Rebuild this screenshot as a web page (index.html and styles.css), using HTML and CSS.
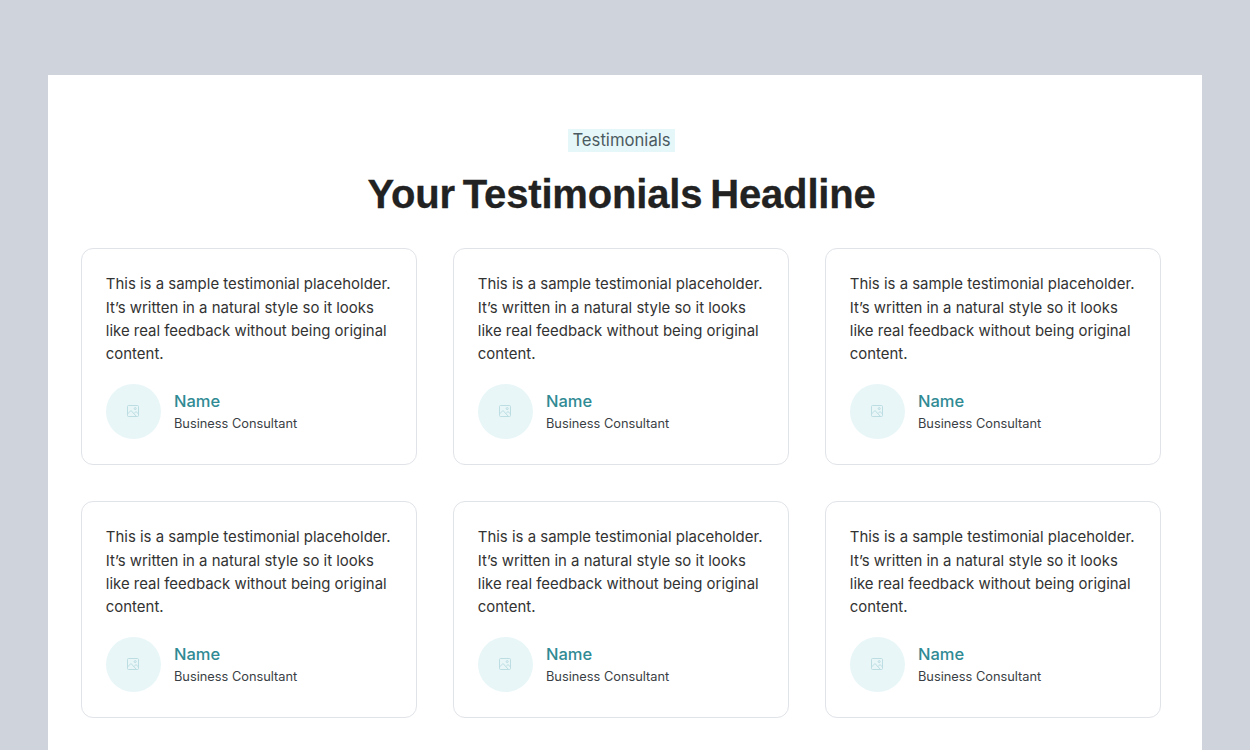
FILE: index.html
```html
<!DOCTYPE html>
<html lang="en">
<head>
  <meta charset="UTF-8" />
  <title>Testimonials</title>
  <link rel="stylesheet" href="styles.css">
</head>
<body>
  <section class="sheet">
    <div class="intro">
      <span class="tag">Testimonials</span>
      <h1>Your Testimonials Headline</h1>
    </div>
    <div class="grid">
      <article class="card">
        <p>This is a sample testimonial placeholder. It’s written in a natural style so it looks like real feedback without being original content.</p>
        <div class="person">
          <div class="avatar">
            <svg viewBox="0 0 12 12"><rect x="0.5" y="0.5" width="11" height="11" rx="1"/><circle cx="8.2" cy="3.6" r="1"/><path d="M0.5 9l3.5-3.5 5.5 6M7 8.5l2-2 2.5 2.5"/></svg>
          </div>
          <div>
            <div class="name">Name</div>
            <div class="role">Business Consultant</div>
          </div>
        </div>
      </article>
      <article class="card">
        <p>This is a sample testimonial placeholder. It’s written in a natural style so it looks like real feedback without being original content.</p>
        <div class="person">
          <div class="avatar">
            <svg viewBox="0 0 12 12"><rect x="0.5" y="0.5" width="11" height="11" rx="1"/><circle cx="8.2" cy="3.6" r="1"/><path d="M0.5 9l3.5-3.5 5.5 6M7 8.5l2-2 2.5 2.5"/></svg>
          </div>
          <div>
            <div class="name">Name</div>
            <div class="role">Business Consultant</div>
          </div>
        </div>
      </article>
      <article class="card">
        <p>This is a sample testimonial placeholder. It’s written in a natural style so it looks like real feedback without being original content.</p>
        <div class="person">
          <div class="avatar">
            <svg viewBox="0 0 12 12"><rect x="0.5" y="0.5" width="11" height="11" rx="1"/><circle cx="8.2" cy="3.6" r="1"/><path d="M0.5 9l3.5-3.5 5.5 6M7 8.5l2-2 2.5 2.5"/></svg>
          </div>
          <div>
            <div class="name">Name</div>
            <div class="role">Business Consultant</div>
          </div>
        </div>
      </article>
      <article class="card">
        <p>This is a sample testimonial placeholder. It’s written in a natural style so it looks like real feedback without being original content.</p>
        <div class="person">
          <div class="avatar">
            <svg viewBox="0 0 12 12"><rect x="0.5" y="0.5" width="11" height="11" rx="1"/><circle cx="8.2" cy="3.6" r="1"/><path d="M0.5 9l3.5-3.5 5.5 6M7 8.5l2-2 2.5 2.5"/></svg>
          </div>
          <div>
            <div class="name">Name</div>
            <div class="role">Business Consultant</div>
          </div>
        </div>
      </article>
      <article class="card">
        <p>This is a sample testimonial placeholder. It’s written in a natural style so it looks like real feedback without being original content.</p>
        <div class="person">
          <div class="avatar">
            <svg viewBox="0 0 12 12"><rect x="0.5" y="0.5" width="11" height="11" rx="1"/><circle cx="8.2" cy="3.6" r="1"/><path d="M0.5 9l3.5-3.5 5.5 6M7 8.5l2-2 2.5 2.5"/></svg>
          </div>
          <div>
            <div class="name">Name</div>
            <div class="role">Business Consultant</div>
          </div>
        </div>
      </article>
      <article class="card">
        <p>This is a sample testimonial placeholder. It’s written in a natural style so it looks like real feedback without being original content.</p>
        <div class="person">
          <div class="avatar">
            <svg viewBox="0 0 12 12"><rect x="0.5" y="0.5" width="11" height="11" rx="1"/><circle cx="8.2" cy="3.6" r="1"/><path d="M0.5 9l3.5-3.5 5.5 6M7 8.5l2-2 2.5 2.5"/></svg>
          </div>
          <div>
            <div class="name">Name</div>
            <div class="role">Business Consultant</div>
          </div>
        </div>
      </article>
    </div>
  </section>
</body>
</html>
```

FILE: styles.css
```css
html, body {
  height: 750px;
  overflow: hidden;
}

body {
  box-sizing: border-box;
  margin: 0;
  padding: 75px 48px 0;
  background: #cfd4dc;
  color: #333;
  font-family: Inter, sans-serif;
}

.sheet {
  height: 675px;
  box-sizing: border-box;
  padding: 54px 40px 0 33px;
  background: #fff;
}

.intro {
  text-align: center;
}

.tag {
  display: inline-block;
  padding: 0 4px;
  background: #e6f7f9;
  color: #4b5a60;
  font-size: 16.7px;
  line-height: 23px;
}

h1 {
  margin: 17px 0 29px;
  color: #222;
  font-family: "Liberation Sans", sans-serif;
  font-size: 40px;
  line-height: 50px;
  font-weight: 700;
  letter-spacing: -0.17px;
  word-spacing: -3px;
  -webkit-text-stroke: 0.3px #222;
}

.grid {
  display: grid;
  grid-template-columns: repeat(3, 336.3px);
  gap: 36px 35.7px;
}

.card {
  box-sizing: border-box;
  height: 217px;
  padding: 24.4px 24px 24px 23.8px;
  border: 1px solid #e0e3e8;
  border-radius: 12px;
}

.card p {
  margin: 0 0 17.6px;
  font-size: 14.95px;
  line-height: 23.3px;
}

.person {
  display: flex;
  align-items: center;
  gap: 13.2px;
}

.avatar {
  display: flex;
  align-items: center;
  justify-content: center;
  width: 55px;
  height: 55px;
  border-radius: 50%;
  background: #e8f6f8;
}

.avatar svg {
  width: 12px;
  height: 12px;
  margin: -1px 0 0 -1px;
  fill: none;
  stroke: #bcdde2;
  stroke-width: 1;
}

.name {
  margin-top: -1px;
  color: #2f8a94;
  font-size: 16.5px;
  font-weight: 500;
  line-height: 24px;
}

.role {
  margin-top: 2px;
  font-size: 12.8px;
  line-height: 18px;
  color: #3a3f45;
}
```
